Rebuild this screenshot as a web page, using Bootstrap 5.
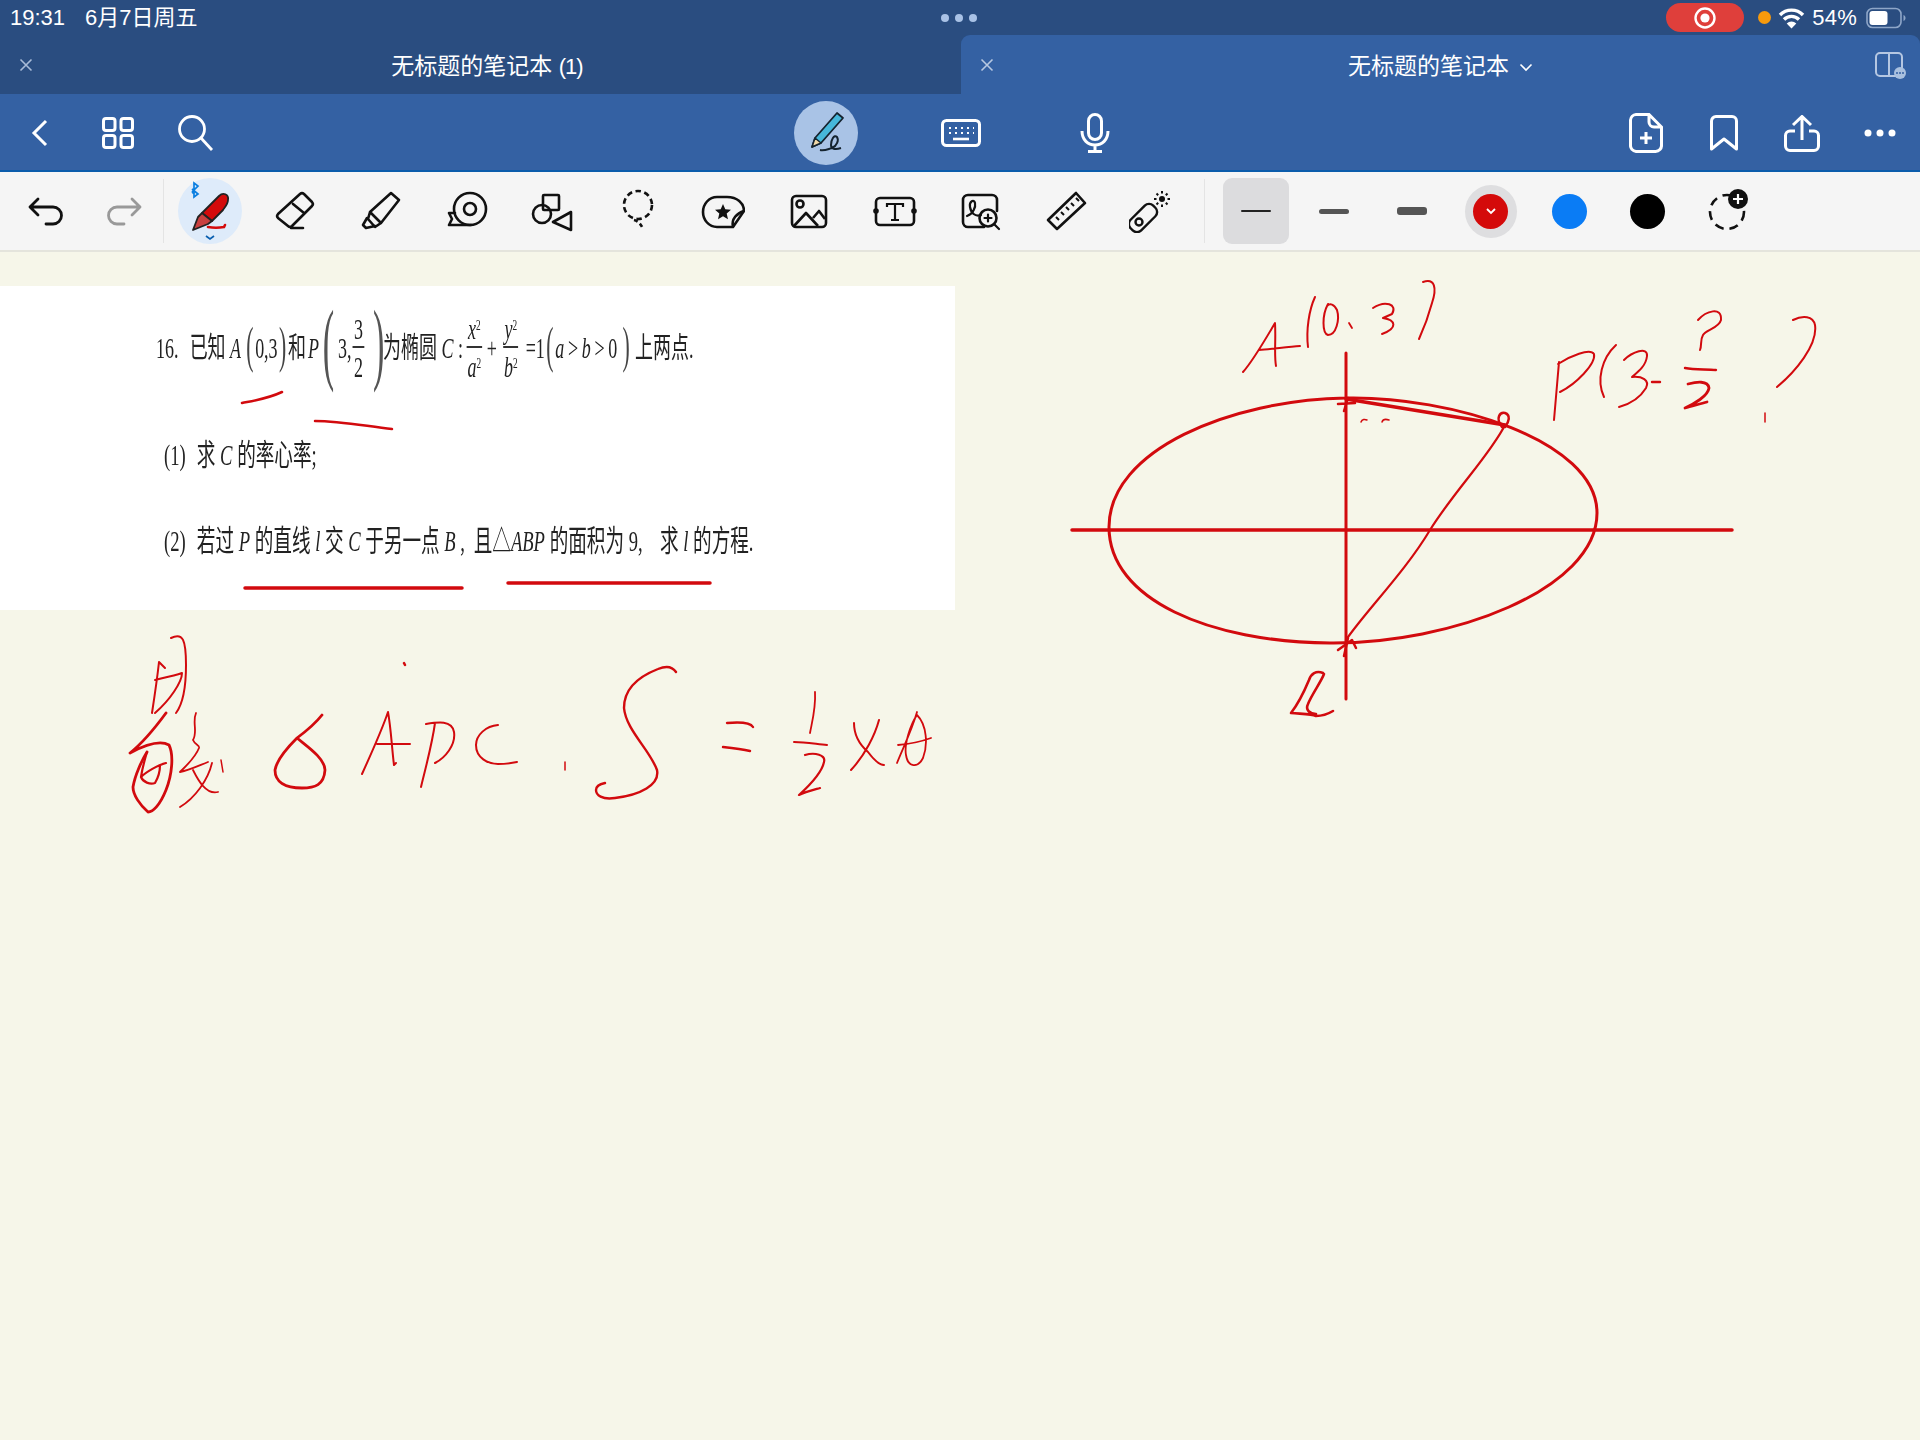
<!doctype html>
<html lang="zh-CN">
<head>
<meta charset="utf-8">
<title>无标题的笔记本</title>
<link href="https://cdn.jsdelivr.net/npm/bootstrap@5.3.0/dist/css/bootstrap.min.css" rel="stylesheet">
<style>
html,body{margin:0;width:1920px;height:1440px;overflow:hidden;background:#f6f6e9}
body{font-family:"Liberation Sans","Noto Sans CJK SC",sans-serif}
svg{display:block;flex:none}
.app-frame{width:1920px;height:1440px}
.top-shell{height:94px;background:#2a4d80;color:#fff}
.status-row{height:35px;font-size:22px;line-height:35px;padding:0 0 0 10px;position:relative}
.status-date{margin-left:20px}
.status-dots{position:absolute;left:941px;top:14px;gap:6px}
.status-dots i{width:8px;height:8px;border-radius:50%;background:#a9c2e6;display:block}
.rec-pill{width:78px;height:29px;border-radius:15px;background:#df3f3b;margin-right:14px}
.orange-dot{width:13px;height:13px;border-radius:50%;background:#f79a0c;margin-right:7px}
.batt-pct{margin:0 9px 0 7px;letter-spacing:.2px}
.tabs-row{height:59px}
.doc-tab{position:relative;height:59px;line-height:62px;font-size:23px;text-align:center}
.doc-tab.off{width:961px;padding-left:13px}
.doc-tab.on{width:959px;background:#3461a3;border-radius:9px 9px 0 0}
.tab-num{letter-spacing:-1px;font-size:22px}
.tab-close{position:absolute;left:19px;top:23px}
.tab-chev{display:inline-block;vertical-align:2px;margin-left:10px}
.tab-split{position:absolute;right:14px;top:16px}
.head-bar{height:76px;background:#3461a3;padding:2px 0 0 1px}
.head-slot{width:78px;height:74px}
.head-mid{margin-left:524px}
.head-mid .head-slot{width:134.5px}
.head-end{margin-left:auto;margin-right:1px}
.pen-disc{width:64px;height:64px;border-radius:50%;background:#a9c3e6}
.blue-rule{height:2px;background:#0b5cab}
.tool-bar{height:78px;background:#f5f5f5;padding-left:7px}
.tool-narrow{width:78px;height:78px}
.tool-wide{width:85.6px;height:78px}
.tool-sep{width:1px;height:64px;background:#e4e4e4;margin:0 3px 0 0}
.tool-sep.second{margin:0 11.4px 0 10px}
.pen-active{width:64px;height:66px;border-radius:50%;background:#deebfa}
.size-opt{width:78.4px;height:78px}
.size-active{width:66px;height:66px;border-radius:9px;background:#dcdcde}
.size-line{width:30px;background:#444;border-radius:3px}
.size-a{height:2px;background:#222}
.size-b{height:5px;background:#555}
.size-c{height:8px;width:30px;background:#555}
.swatch-ring{width:52px;height:53px;border-radius:50%;background:#dedee0}
.swatch{width:35px;height:35px;border-radius:50%}
.sw-red{background:#d40a0a}
.sw-blue{background:#0a7cf5}
.sw-black{background:#000}
.paper-line{height:2px;background:#e4e4dc}
.paper{position:relative;height:1188px;background:#f6f6e9;padding-top:34px}
.question-img{width:955px;height:324px;background:#fff;padding:12px 0 0 156px;color:#222;font-family:"Liberation Serif","Noto Sans CJK SC",serif;font-size:29px;line-height:36px;filter:blur(.45px)}
.q-line{white-space:nowrap;display:flex;align-items:center;transform-origin:left center}
.q-one{height:100px;transform:scaleX(.62)}
.q-two{height:36px;margin:39px 0 0 8px;transform:scaleX(.62);font-size:30px}
.q-three{height:36px;margin:50px 0 0 8px;transform:scaleX(.62);font-size:30px}
.tall-paren{font-size:92px;line-height:92px;margin-top:-12px;color:#555;transform:scaleX(.6)}
.mid-paren{font-size:50px;line-height:50px;margin-top:-6px;color:#444;transform:scaleX(.7)}
.q-frac{display:inline-flex;flex-direction:column;align-items:center;line-height:34px;margin:0 2px}
.q-frac>span:first-child{border-bottom:2px solid #333;padding:0 2px;margin-bottom:2px}
.q-frac sup{font-size:15px;top:-.6em}
.sp-6{margin-left:6px}.sp-10{margin-left:10px}.sp-14{margin-left:14px}.sp-18{margin-left:18px}.sp-28{margin-left:28px}
.sn-4{margin-left:-4px}.sn-8{margin-left:-8px}
.q-wide{letter-spacing:6px}
.ink-layer{position:absolute;left:0;top:0;width:1920px;height:1188px}
.ink-layer path{fill:none;stroke:#d20a0e;stroke-linecap:round;stroke-linejoin:round}
</style>
</head>
<body>
<div class="app-frame d-flex flex-column">
  <div class="top-shell">
    <div class="status-row d-flex align-items-center">
      <span>19:31</span><span class="status-date">6月7日周五</span>
      <div class="status-dots d-flex"><i></i><i></i><i></i></div>
      <div class="ms-auto d-flex align-items-center" style="padding-right:14px">
        <div class="rec-pill d-flex align-items-center justify-content-center">
          <svg width="24" height="24" viewBox="0 0 24 24"><circle cx="12" cy="12" r="9.5" fill="none" stroke="#fff" stroke-width="2.4"/><circle cx="12" cy="12" r="4.6" fill="#fff"/></svg>
        </div>
        <div class="orange-dot"></div>
        <svg width="27" height="22" viewBox="0 0 27 22"><path d="M2 8a16 16 0 0 1 23 0M6 12.500a10.500 10.500 0 0 1 15 0" fill="none" stroke="#fff" stroke-width="3.400"/><path d="M13.500 21.500l-4.800-5a7 7 0 0 1 9.600 0z" fill="#fff"/></svg>
        <span class="batt-pct">54%</span>
        <svg width="40" height="22" viewBox="0 0 40 22"><rect x="1" y="1.5" width="34" height="19" rx="5.5" fill="none" stroke="#8ea6c8" stroke-width="1.6"/><rect x="3.5" y="4" width="18" height="14" rx="3" fill="#fff"/><path d="M37.5 8v6c1.400-.5 2-1.700 2-3s-.6-2.500-2-3z" fill="#8ea6c8"/></svg>
      </div>
    </div>
    <div class="tabs-row d-flex">
      <div class="doc-tab off">
        <svg class="tab-close" width="14" height="14" viewBox="0 0 14 14"><path d="M1.500 1.500l11 11M12.500 1.500l-11 11" stroke="#a9bcd8" stroke-width="1.600" fill="none"/></svg>
        无标题的笔记本 <span class="tab-num">(1)</span>
      </div>
      <div class="doc-tab on">
        <svg class="tab-close" width="14" height="14" viewBox="0 0 14 14"><path d="M1.500 1.500l11 11M12.500 1.500l-11 11" stroke="#b7c8e2" stroke-width="1.600" fill="none"/></svg>
        无标题的笔记本<svg class="tab-chev" width="14" height="9" viewBox="0 0 14 9"><path d="M1.500 1.500L7 7l5.500-5.500" stroke="#fff" stroke-width="1.600" fill="none"/></svg>
        <svg class="tab-split" width="32" height="28" viewBox="0 0 32 28"><rect x="2" y="2" width="26" height="23" rx="4" fill="none" stroke="#b5c7e2" stroke-width="2"/><path d="M15 2v23" stroke="#b5c7e2" stroke-width="2"/><circle cx="26" cy="22" r="6" fill="#a9c0df"/><circle cx="23" cy="22" r="1" fill="#3461a3"/><circle cx="26" cy="22" r="1" fill="#3461a3"/><circle cx="29" cy="22" r="1" fill="#3461a3"/></svg>
      </div>
    </div>
  </div>

  <div class="head-bar d-flex align-items-center">
    <div class="d-flex">
      <div class="head-slot d-flex align-items-center justify-content-center"><svg width="18" height="28" viewBox="0 0 18 28" fill="none" stroke="#fff" stroke-width="3"><path d="M15 2L3 14l12 12"/></svg></div>
      <div class="head-slot d-flex align-items-center justify-content-center"><svg width="32" height="32" viewBox="0 0 32 32" fill="none" stroke="#fff" stroke-width="3"><rect x="1.500" y="1.500" width="11.500" height="12" rx="2.500"/><rect x="19" y="1.500" width="11.500" height="12" rx="2.500"/><rect x="1.500" y="18.500" width="11.500" height="12" rx="2.500"/><rect x="19" y="18.500" width="11.500" height="12" rx="2.500"/></svg></div>
      <div class="head-slot d-flex align-items-center justify-content-center"><svg width="36" height="36" viewBox="0 0 36 36" fill="none" stroke="#fff" stroke-width="2.800"><circle cx="14" cy="14" r="12.500"/><path d="M23 23l11 12"/></svg></div>
    </div>
    <div class="head-mid d-flex">
      <div class="head-slot d-flex align-items-center justify-content-center">
        <div class="pen-disc d-flex align-items-center justify-content-center">
          <svg width="44" height="44" viewBox="0 0 44 44"><path d="M33 2l6 5-22 25-9 4 3-9z" fill="#46b7da" stroke="#15232f" stroke-width="1.800" stroke-linejoin="round"/><path d="M11 27l6 5-9 4z" fill="#f1d9a8" stroke="#15232f" stroke-width="1.500" stroke-linejoin="round"/><path d="M16 39c5 1 8-1 12-2 5-2 7-8 5-11-3-3-6 3-6 8 0 4 4 5 10 3" fill="none" stroke="#15232f" stroke-width="2"/></svg>
        </div>
      </div>
      <div class="head-slot d-flex align-items-center justify-content-center"><svg width="40" height="28" viewBox="0 0 40 28" fill="none" stroke="#fff"><rect x="1.500" y="1.500" width="37" height="25" rx="4" stroke-width="3"/><path d="M8 9h2M14 9h2M20 9h2M26 9h2M32 9h1M8 14h2M14 14h2M20 14h2M26 14h2M32 14h1" stroke-width="2.200"/><path d="M12 20h16" stroke-width="2.600"/></svg></div>
      <div class="head-slot d-flex align-items-center justify-content-center"><svg width="30" height="40" viewBox="0 0 30 40" fill="none" stroke="#fff" stroke-width="3"><rect x="8.500" y="1.500" width="13" height="25" rx="6.500"/><path d="M2 18c0 9 6 14 13 14s13-5 13-14M15 32v6M8 38.500h14"/></svg></div>
    </div>
    <div class="head-end d-flex">
      <div class="head-slot d-flex align-items-center justify-content-center"><svg width="34" height="40" viewBox="0 0 34 40" fill="none" stroke="#fff" stroke-width="3"><path d="M7 1.500h13l12.500 12.500V32a6 6 0 0 1-6 6.500H7A6 6 0 0 1 1.500 32V7A6 6 0 0 1 7 1.500zM20 1.500V9a5 5 0 0 0 5 5h7.500"/><path d="M17 19v12M11 25h12"/></svg></div>
      <div class="head-slot d-flex align-items-center justify-content-center"><svg width="28" height="36" viewBox="0 0 28 36" fill="none" stroke="#fff" stroke-width="3" stroke-linejoin="round"><path d="M1.500 6a4.500 4.500 0 0 1 4.500-4.500h16A4.500 4.500 0 0 1 26.500 6v28L14 24 1.500 34z"/></svg></div>
      <div class="head-slot d-flex align-items-center justify-content-center"><svg width="36" height="37" viewBox="0 0 36 37" fill="none" stroke="#fff" stroke-width="3"><path d="M18 25V2M9 10l9-8.500 9 8.500M11 16H6a4.500 4.500 0 0 0-4.500 4.500V31A4.500 4.500 0 0 0 6 35.500h24a4.500 4.500 0 0 0 4.500-4.500V20.500A4.500 4.500 0 0 0 30 16h-5"/></svg></div>
      <div class="head-slot d-flex align-items-center justify-content-center"><svg width="32" height="8" viewBox="0 0 32 8" fill="#fff"><circle cx="4" cy="4" r="3.500"/><circle cx="16" cy="4" r="3.500"/><circle cx="28" cy="4" r="3.500"/></svg></div>
    </div>
  </div>
  <div class="blue-rule"></div>

  <div class="tool-bar d-flex align-items-center">
    <div class="tool-narrow d-flex align-items-center justify-content-center"><svg width="44" height="44" viewBox="0 0 44 44" fill="none" stroke="#111" stroke-width="2.800" stroke-linecap="round" stroke-linejoin="round"><path d="M14 10L6 18l8 8M6 18h23a8.500 8.500 0 0 1 0 17h-7"/></svg></div>
    <div class="tool-narrow d-flex align-items-center justify-content-center"><svg width="44" height="44" viewBox="0 0 44 44" fill="none" stroke="#999" stroke-width="2.800" stroke-linecap="round" stroke-linejoin="round"><path d="M30 10l8 8-8 8M38 18H15a8.500 8.500 0 0 0 0 17h7"/></svg></div>
    <div class="tool-sep"></div>
    <div class="tool-wide d-flex align-items-center justify-content-center">
      <div class="pen-active"><svg width="64" height="66" viewBox="0 0 64 66"><path d="M14 11l6 5-4 3v-14l4 3-6 6M14 14l2 2" fill="none" stroke="#0a7ee0" stroke-width="1.700"/><path d="M24 35L41 18c4-4 10-2 9 4 0 4-3 7-5 10L34 43z" fill="#d40b0b" stroke="#222" stroke-width="1.800" stroke-linejoin="round"/><path d="M15 52l5-13 4-4 10 8-4 3z" fill="#c9403f" stroke="#222" stroke-width="1.800" stroke-linejoin="round"/><path d="M30 49c5 1 11 1 16 0l1-2" fill="none" stroke="#d40b0b" stroke-width="2.600" stroke-linecap="round"/><path d="M28 58l4 3 4-3" fill="none" stroke="#0a5fb0" stroke-width="1.700"/></svg></div>
    </div>
    <div class="tool-wide d-flex align-items-center justify-content-center"><svg width="44" height="44" viewBox="0 0 44 44" fill="none" stroke="#111" stroke-width="2.600" stroke-linecap="round" stroke-linejoin="round"><path d="M27 5a3 3 0 0 1 4 0l8 8a3 3 0 0 1 0 4L19 37a3 3 0 0 1-4 0l-10-8a3 3 0 0 1 0-4zM20 15l11 9M18 39h12"/></svg></div>
    <div class="tool-wide d-flex align-items-center justify-content-center"><svg width="44" height="44" viewBox="0 0 44 44" fill="none" stroke="#111" stroke-width="2.600" stroke-linecap="round" stroke-linejoin="round"><path d="M32 4l8 7-18 23-6 4-7-8 2-7zM11 23l11 11M8 29l-4 7 3 3 9-2"/></svg></div>
    <div class="tool-wide d-flex align-items-center justify-content-center"><svg width="44" height="44" viewBox="0 0 44 44" fill="none" stroke="#111" stroke-width="2.600" stroke-linecap="round" stroke-linejoin="round"><circle cx="25" cy="20" r="16"/><circle cx="25" cy="20" r="6"/><path d="M10 24H4l3 6-3 6h22"/></svg></div>
    <div class="tool-wide d-flex align-items-center justify-content-center"><svg width="44" height="44" viewBox="0 0 44 44" fill="none" stroke="#111" stroke-width="2.600" stroke-linejoin="round"><rect x="13" y="6" width="16" height="15" rx="1"/><circle cx="12" cy="25" r="9"/><path d="M41 23L23 33l18 8z"/></svg></div>
    <div class="tool-wide d-flex align-items-center justify-content-center"><svg width="44" height="44" viewBox="0 0 44 44" fill="none" stroke="#111" stroke-width="2.600"><circle cx="22" cy="16" r="14" stroke-dasharray="5.500 3.500"/><path d="M18 31c4 1 7 4 9 9" stroke-dasharray="4 3"/></svg></div>
    <div class="tool-wide d-flex align-items-center justify-content-center"><svg width="44" height="44" viewBox="0 0 44 44" fill="none" stroke="#111" stroke-width="2.600" stroke-linejoin="round"><path d="M16 8h10c10 0 17 6 17 14L32 38H16C8 38 2 31 2 23S8 8 16 8z"/><path d="M43 22c-7 2-13 8-11 16"/><path d="M22 15l2.300 5.300 5.700.5-4.300 3.800 1.300 5.600-5-3-5 3 1.300-5.600-4.300-3.800 5.700-.5z" fill="#111" stroke="none"/></svg></div>
    <div class="tool-wide d-flex align-items-center justify-content-center"><svg width="44" height="44" viewBox="0 0 44 44" fill="none" stroke="#111" stroke-width="2.600" stroke-linejoin="round"><rect x="5" y="7" width="34" height="31" rx="4"/><circle cx="13" cy="15" r="3.500"/><path d="M7 37l12-13 12 13M26 29l6-7 6 8"/></svg></div>
    <div class="tool-wide d-flex align-items-center justify-content-center"><svg width="46" height="44" viewBox="0 0 46 44" fill="none" stroke="#111" stroke-width="2.600"><rect x="4" y="9" width="38" height="27" rx="4"/><circle cx="4" cy="22" r="2.800" fill="#111" stroke="none"/><circle cx="42" cy="22" r="2.800" fill="#111" stroke="none"/><path d="M15 18v-3h16v3M23 15v16M19 31h8" stroke-width="2.200"/></svg></div>
    <div class="tool-wide d-flex align-items-center justify-content-center"><svg width="44" height="44" viewBox="0 0 44 44" fill="none" stroke="#111" stroke-width="2.600" stroke-linecap="round"><path d="M26 38H10a5 5 0 0 1-5-5V11a5 5 0 0 1 5-5h24a5 5 0 0 1 5 5v11"/><path d="M9 27c6-2 9-9 8-13-1-4-6-2-5 4 1 6 5 10 11 8" stroke-width="2.200"/><circle cx="30" cy="29" r="8.500"/><path d="M30 25.500v7M26.500 29h7M36 35l5 5" stroke-width="2.200"/></svg></div>
    <div class="tool-wide d-flex align-items-center justify-content-center"><svg width="44" height="44" viewBox="0 0 44 44" fill="none" stroke="#111" stroke-width="2.600" stroke-linejoin="round"><path d="M4 31L32 4l9 10-28 26z"/><path d="M12 28l3 3M17 23l3 3M22 18l3 3M27 14l3 3M32 9l3 3" stroke-width="2"/></svg></div>
    <div class="tool-wide d-flex align-items-center justify-content-center"><svg width="44" height="44" viewBox="0 0 44 44" fill="none" stroke="#111" stroke-width="2.400"><rect x="-2" y="21.500" width="32" height="15" rx="6" transform="rotate(-45 14 29)"/><circle cx="10" cy="33" r="3.500"/><circle cx="33" cy="10" r="3" fill="#111" stroke="none"/><path d="M33 2v2.500M33 15.500V18M25 10h2.500M38.500 10H41M27.500 4.500l1.700 1.700M36.800 13.800l1.700 1.700M27.500 15.500l1.700-1.700M36.800 6.200l1.700-1.700" stroke-width="2"/></svg></div>
    <div class="tool-sep second"></div>
    <div class="size-opt d-flex align-items-center justify-content-center"><div class="size-active d-flex align-items-center justify-content-center"><div class="size-line size-a"></div></div></div>
    <div class="size-opt d-flex align-items-center justify-content-center"><div class="size-line size-b"></div></div>
    <div class="size-opt d-flex align-items-center justify-content-center"><div class="size-line size-c"></div></div>
    <div class="size-opt d-flex align-items-center justify-content-center"><div class="swatch-ring d-flex align-items-center justify-content-center"><div class="swatch sw-red d-flex align-items-center justify-content-center"><svg width="10" height="7" viewBox="0 0 10 7"><path d="M1 1l4 4 4-4" fill="none" stroke="#fff" stroke-width="1.800"/></svg></div></div></div>
    <div class="size-opt d-flex align-items-center justify-content-center"><div class="swatch sw-blue"></div></div>
    <div class="size-opt d-flex align-items-center justify-content-center"><div class="swatch sw-black"></div></div>
    <div class="size-opt d-flex align-items-center justify-content-center"><svg width="48" height="48" viewBox="0 0 48 48"><circle cx="25" cy="25" r="17" fill="none" stroke="#111" stroke-width="2.600" stroke-dasharray="9 6"/><circle cx="36" cy="12" r="10" fill="#111"/><path d="M36 7v10M31 12h10" stroke="#fff" stroke-width="2.200"/></svg></div>
  </div>
  <div class="paper-line"></div>

  <div class="paper">
    <div class="question-img">
      <div class="q-line q-one">16.<span class="sp-18">已知</span>&nbsp;<i>A</i><span class="mid-paren sp-6">(</span>0,3<span class="mid-paren">)</span><span>和</span><span class="sn-4">&nbsp;</span><i>P</i><span class="tall-paren">(</span>3,<span class="q-frac"><span>3</span><span>2</span></span><span class="tall-paren sp-6">)</span><span class="sn-8">为椭圆</span>&nbsp;<i>C</i>&nbsp;:<span class="q-frac sp-6"><span><i>x</i><sup>2</sup></span><span><i>a</i><sup>2</sup></span></span><span class="sp-6">+</span><span class="q-frac sp-10"><span><i>y</i><sup>2</sup></span><span><i>b</i><sup>2</sup></span></span><span class="sp-10">=1</span><span class="mid-paren">(</span><span class="q-wide"><i>a</i>&gt;<i>b</i>&gt;0</span><span class="mid-paren">)</span><span class="sp-6">上两点.</span></div>
      <div class="q-line q-two">(1)<span class="sp-18">求</span>&nbsp;<i>C</i>&nbsp;的率心率;</div>
      <div class="q-line q-three">(2)<span class="sp-18">若过</span>&nbsp;<i>P</i>&nbsp;的直线&nbsp;<i>l</i>&nbsp;交&nbsp;<i>C</i>&nbsp;于另一点&nbsp;<i>B</i>&nbsp;,<span class="sp-14">且</span>△<i>ABP</i>&nbsp;的面积为&nbsp;9,<span class="sp-28">求</span>&nbsp;<i>l</i>&nbsp;的方程.</div>
    </div>
    <svg class="ink-layer" viewBox="0 252 1920 1188">
      <g>
        <path stroke-width="2.500" d="M242 403c10-2 25-4 40-11"/>
        <path stroke-width="2.500" d="M315 421c25 0 50 5 77 8"/>
        <path stroke-width="3.500" d="M245 588H462"/>
        <path stroke-width="3.500" d="M508 583H710"/>
      </g>
      <g>
        <path stroke-width="3" d="M1346 398C1450 396 1597 440 1597 513C1597 590 1450 644 1330 643C1210 642 1109 600 1109 527C1109 450 1230 400 1346 398"/>
        <path stroke-width="3.500" d="M1072 530H1732"/>
        <path stroke-width="3" d="M1346 353V699"/>
        <path stroke-width="3.500" d="M1346 399L1505 425"/>
        <path stroke-width="2.200" d="M1505 425C1490 455 1455 490 1430 530C1405 572 1365 612 1346 640"/>
        <path stroke-width="2.500" d="M1502 427C1495 418 1500 412 1505 413C1511 415 1509 422 1505 427"/>
        <path stroke-width="2.500" d="M1338 404L1355 403M1344 411L1348 398"/>
        <path stroke-width="2.500" d="M1338 650L1352 640L1356 648M1344 656L1348 638"/>
        <path stroke-width="1.500" d="M1361 422C1362 419 1365 419 1367 420M1382 422C1383 419 1386 419 1389 420"/>
        <path stroke-width="2" d="M1243 372C1252 362 1268 335 1275 323C1276 340 1274 355 1276 366M1259 350C1272 349 1287 347 1300 346"/>
        <path stroke-width="2" d="M1315 297C1309 310 1306 330 1308 347"/>
        <path stroke-width="2" d="M1328 304C1322 315 1322 333 1328 335C1336 335 1340 320 1337 310C1334 304 1330 303 1327 306"/>
        <path stroke-width="1.800" d="M1349 323L1352 328"/>
        <path stroke-width="2" d="M1373 308C1385 300 1398 304 1392 314L1383 318C1396 320 1398 328 1382 334"/>
        <path stroke-width="2" d="M1423 282C1435 278 1437 288 1432 303C1428 318 1424 328 1419 339"/>
        <path stroke-width="2" d="M1559 362L1554 420M1558 364C1570 356 1590 348 1594 354C1596 364 1576 384 1560 392"/>
        <path stroke-width="2" d="M1616 345C1602 358 1596 380 1604 397"/>
        <path stroke-width="2" d="M1624 360C1632 352 1648 346 1647 356C1646 366 1638 372 1632 377C1642 376 1650 380 1646 388C1640 398 1630 404 1619 407"/>
        <path stroke-width="2.400" d="M1652 382H1660"/>
        <path stroke-width="2" d="M1698 320C1706 311 1722 306 1721 320C1719 328 1706 330 1703 335C1700 340 1702 345 1700 350"/>
        <path stroke-width="2.400" d="M1685 368C1695 370 1706 369 1716 370"/>
        <path stroke-width="2.800" d="M1688 384C1696 382 1708 380 1709 388C1708 396 1694 404 1685 408C1692 406 1700 404 1707 402"/>
        <path stroke-width="2" d="M1793 320C1803 315 1813 316 1815 325C1818 345 1795 372 1777 387"/>
        <path stroke-width="1.500" d="M1765 413V422"/>
        <path stroke-width="2.600" d="M1323 673C1316 670 1311 674 1309 680C1304 692 1298 704 1291 713C1302 714 1312 714 1316 716C1322 716 1328 714 1333 711M1324 674C1321 682 1312 694 1308 704C1305 710 1310 714 1316 714"/>
        <path stroke-width="2" d="M171 638C183 632 186 640 186 665C186 690 182 705 176 713"/>
        <path stroke-width="2" d="M159 662C157 680 154 700 152 713M159 662L165 668M155 680C163 678 173 676 182 673C182 682 170 700 155 713"/>
        <path stroke-width="2.800" d="M166 713C155 728 140 745 130 753C145 745 160 740 169 745C174 755 172 775 166 790C160 805 153 812 148 812C140 805 133 795 133 787C135 775 142 760 147 752"/>
        <path stroke-width="2.200" d="M166 763C158 765 146 772 141 777C143 782 150 785 155 783C158 778 160 770 160 765M147 752C144 762 142 770 141 777"/>
        <path stroke-width="1.800" d="M196 713C192 722 198 732 193 740C195 745 200 745 199 748C195 758 186 766 180 772C190 770 200 765 208 762"/>
        <path stroke-width="1.800" d="M193 770C198 780 206 795 218 792M212 763C208 780 195 798 180 807"/>
        <path stroke-width="1.500" d="M221 760L223 772"/>
        <path stroke-width="2.800" d="M322 715C315 724 305 732 297 738C290 745 277 758 275 770C275 782 285 788 302 788C315 788 324 785 325 770C325 758 305 745 297 738"/>
        <path stroke-width="2.500" d="M404 663L405 665"/>
        <path stroke-width="2" d="M362 774C372 752 382 730 388 712C391 728 392 750 394 765L396 763M377 744H410"/>
        <path stroke-width="2" d="M435 723C432 745 425 770 421 787M426 724C438 722 452 720 454 732C456 745 445 758 435 763"/>
        <path stroke-width="2" d="M498 725C486 726 476 735 476 745C476 758 488 764 498 764C505 764 512 763 517 762"/>
        <path stroke-width="1.500" d="M565 762V770"/>
        <path stroke-width="2.400" d="M676 672C672 666 665 666 658 669C640 676 624 688 624 708C626 730 650 750 657 770C660 785 640 795 615 798C602 800 596 795 596 790C596 786 600 784 605 783"/>
        <path stroke-width="2.400" d="M727 723C738 722 750 722 753 727M723 747C733 748 742 749 750 751"/>
        <path stroke-width="1.800" d="M815 692C816 708 812 722 810 733"/>
        <path stroke-width="2" d="M794 742C805 742 816 744 827 745"/>
        <path stroke-width="2.200" d="M805 755C815 752 826 755 824 762C822 772 810 785 799 795C805 792 813 790 820 788"/>
        <path stroke-width="2" d="M854 723C854 735 860 745 868 752C874 760 880 765 884 765M879 720C875 735 865 755 851 770"/>
        <path stroke-width="1.800" d="M917 712C912 730 902 750 897 763M917 715C910 725 904 745 906 755C908 768 918 768 923 758C928 745 927 725 917 715M898 745C910 744 920 742 931 738"/>
      </g>
    </svg>
  </div>
</div>
<script src="https://cdn.jsdelivr.net/npm/bootstrap@5.3.0/dist/js/bootstrap.bundle.min.js"></script>
</body>
</html>
